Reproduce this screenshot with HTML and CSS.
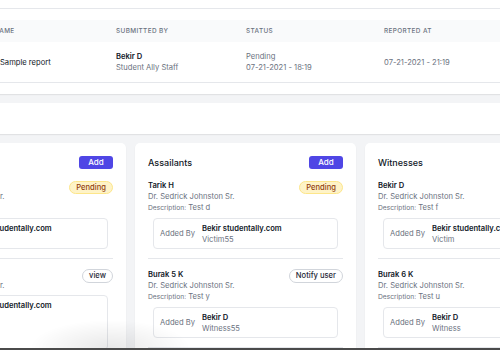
FILE: index.html
```html
<!DOCTYPE html>
<html>
	<head>
		<meta charset="utf-8" />
		<title>Report</title>
		<link rel="stylesheet" href="styles.css">
	</head>
	<body>
		<div class="top"></div>
		<div class="table-card">
			<div class="thead">
				<div class="c1">Name</div>
				<div>Submitted by</div>
				<div>Status</div>
				<div>Reported at</div>
			</div>
			<div class="trow">
				<div class="dark">Sample report</div>
				<div>
					<div class="strong">Bekir D</div>
					<div class="muted">Student Ally Staff</div>
				</div>
				<div class="muted">
					<div>Pending</div>
					<div>07-21-2021 - 18:19</div>
				</div>
				<div class="muted">07-21-2021 - 21:19</div>
			</div>
		</div>
		<div class="band"></div>

		<div class="cards">
			<div class="card">
				<div class="card-head">
					<div class="title">Victims</div>
					<div class="btn-add">Add</div>
				</div>
				<div class="item">
					<div class="item-top">
						<div>
							<div class="name">Bekir D</div>
							<div class="muted">Dr. Sedrick Johnston Sr.</div>
							<div class="desc"><span>Description:</span> Test a</div>
						</div>
						<div class="badge">Pending</div>
					</div>
					<div class="added">
						<div class="label">Added By</div>
						<div>
							<div class="strong">Bekir studentally.com</div>
							<div class="muted">Victim</div>
						</div>
					</div>
				</div>
				<div class="item">
					<div class="item-top">
						<div>
							<div class="name">Burak 4 K</div>
							<div class="muted">Dr. Sedrick Johnston Sr.</div>
						</div>
						<div class="pill">view</div>
					</div>
					<div class="added">
						<div class="label">Added By</div>
						<div>
							<div class="strong">Bekir studentally.com</div>
							<div class="muted">Victim</div>
							<div class="strong next">Bekir D</div>
							<div class="muted">Victim</div>
						</div>
					</div>
				</div>
			</div>

			<div class="card">
				<div class="card-head">
					<div class="title">Assailants</div>
					<div class="btn-add">Add</div>
				</div>
				<div class="item">
					<div class="item-top">
						<div>
							<div class="name">Tarik H</div>
							<div class="muted">Dr. Sedrick Johnston Sr.</div>
							<div class="desc"><span>Description:</span> Test d</div>
						</div>
						<div class="badge">Pending</div>
					</div>
					<div class="added">
						<div class="label">Added By</div>
						<div>
							<div class="strong">Bekir studentally.com</div>
							<div class="muted">Victim55</div>
						</div>
					</div>
				</div>
				<div class="item">
					<div class="item-top">
						<div>
							<div class="name">Burak 5 K</div>
							<div class="muted">Dr. Sedrick Johnston Sr.</div>
							<div class="desc"><span>Description:</span> Test y</div>
						</div>
						<div class="pill">Notify user</div>
					</div>
					<div class="added">
						<div class="label">Added By</div>
						<div>
							<div class="strong">Bekir D</div>
							<div class="muted">Witness55</div>
						</div>
					</div>
				</div>
			</div>

			<div class="card">
				<div class="card-head">
					<div class="title">Witnesses</div>
					<div class="btn-add">Add</div>
				</div>
				<div class="item">
					<div class="item-top">
						<div>
							<div class="name">Bekir D</div>
							<div class="muted">Dr. Sedrick Johnston Sr.</div>
							<div class="desc"><span>Description:</span> Test f</div>
						</div>
					</div>
					<div class="added">
						<div class="label">Added By</div>
						<div>
							<div class="strong">Bekir studentally.com</div>
							<div class="muted">Victim</div>
						</div>
					</div>
				</div>
				<div class="item">
					<div class="item-top">
						<div>
							<div class="name">Burak 6 K</div>
							<div class="muted">Dr. Sedrick Johnston Sr.</div>
							<div class="desc"><span>Description:</span> Test u</div>
						</div>
					</div>
					<div class="added">
						<div class="label">Added By</div>
						<div>
							<div class="strong">Bekir D</div>
							<div class="muted">Witness</div>
						</div>
					</div>
				</div>
			</div>
		</div>

		<div class="shade"></div>
		<div class="edge"></div>
	</body>
</html>
```

FILE: styles.css
```css
html,body{
	margin: 0;
	padding: 0;
}
body{
	width: 500px;
	height: 350px;
	overflow: hidden;
	background: #f3f4f6;
	font-family: Inter, "Liberation Sans", sans-serif;
	font-size: 7.6px;
	line-height: 11px;
	color: #111827;
}
.top{
	height: 8px;
	background: #fff;
	border-bottom: 1px solid #e5e7eb;
}
.table-card{
	background: #fff;
	padding: 11px 0;
	box-shadow: 0 1px 1px rgba(0,0,0,.07);
}
.thead,.trow{
	display: grid;
	grid-template-columns: 116px 130px 138px 1fr;
	align-items: center;
}
.thead{
	height: 22px;
	background: #f9fafb;
	color: #6b7280;
	font-size: 6.4px;
	font-weight: 500;
	letter-spacing: .06em;
	text-transform: uppercase;
}
.thead .c1{
	text-indent: -6px;
	overflow: hidden;
}
.trow{
	height: 40px;
	border-bottom: 1px solid #e5e7eb;
}
.dark{color: #111827;}
.strong{
	font-weight: 600;
	color: #111827;
}
.muted{color: #6b7280;}
.band{
	height: 31px;
	margin-top: 9px;
	background: #fff;
	box-shadow: 0 1px 1px rgba(0,0,0,.07);
}
.cards{
	display: grid;
	grid-template-columns: repeat(3, 221px);
	gap: 9px;
	margin: 9px 0 0 -95px;
}
.card{
	background: #fff;
	border-radius: 5px;
	padding: 13px 13px 0;
	box-shadow: 0 1px 2px rgba(0,0,0,.05);
}
.card-head{
	display: flex;
	justify-content: space-between;
	align-items: center;
	height: 13px;
	margin-bottom: 1px;
}
.title{
	font-size: 9px;
	font-weight: 500;
}
.btn-add{
	width: 34px;
	height: 13px;
	line-height: 13px;
	text-align: center;
	background: #4f46e5;
	color: #fff;
	border-radius: 3px;
	font-size: 8px;
	font-weight: 500;
}
.item{
	padding: 10px 0 9px;
	border-bottom: 1px solid #e5e7eb;
}
.item-top{
	display: flex;
	justify-content: space-between;
	align-items: flex-start;
}
.name{
	font-weight: 600;
}
.desc{
	color: #6b7280;
}
.desc span{
	font-size: 6.7px;
}
.badge{
	height: 11px;
	line-height: 11px;
	padding: 0 6px;
	margin-top: 1px;
	background: #fef3c7;
	border: 1px solid #fde68a;
	border-radius: 7px;
	color: #92400e;
	font-weight: 500;
}
.pill{
	height: 12px;
	line-height: 12px;
	padding: 0 6px;
	border: 1px solid #d1d5db;
	border-radius: 7px;
	background: #fff;
	color: #1f2937;
	font-weight: 500;
}
.added{
	display: flex;
	align-items: center;
	margin: 4px 5px 0;
	padding: 3.5px 6px;
	border: 1px solid #e5e7eb;
	border-radius: 4px;
}
.label{
	width: 42px;
	color: #6b7280;
}
.next{
	margin-top: 2px;
}
.shade{
	position: fixed;
	left: 0;
	bottom: 2px;
	width: 220px;
	height: 32px;
	background: radial-gradient(ellipse 80px 28px at 110px 100%, rgba(0,0,0,.09), rgba(0,0,0,0));
}
.edge{
	position: fixed;
	left: 0;
	bottom: 0;
	width: 500px;
	height: 2px;
	background: #4b4b4b;
}
```
